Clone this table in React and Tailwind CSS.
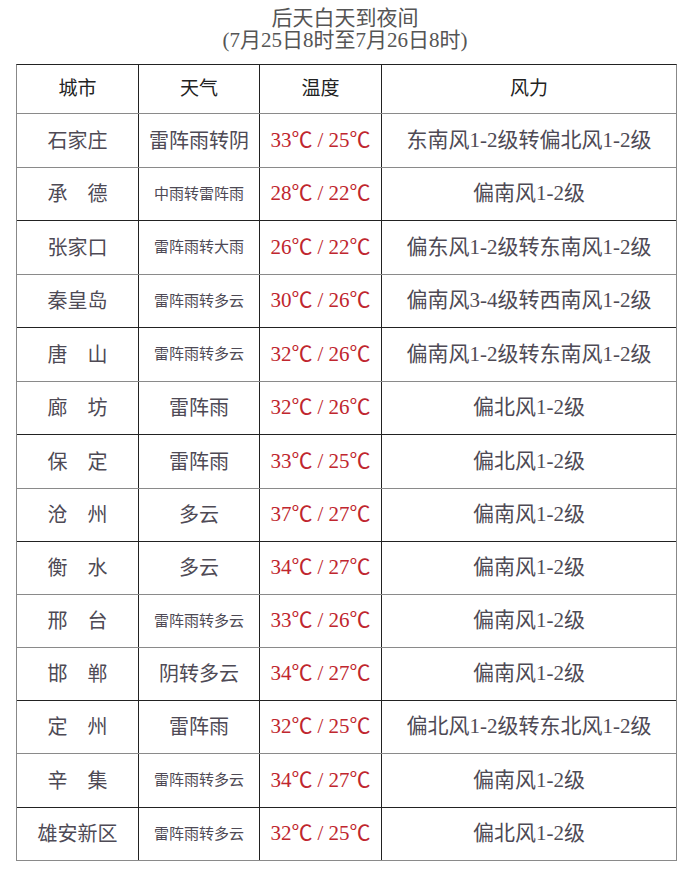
const font = '[font-family:"Liberation_Serif","Noto_Sans_CJK_SC",serif]'

const rows = [
  { city: '石家庄', weather: '雷阵雨转阴', big: true, temp: ['33', '25'], wind: '东南风1-2级转偏北风1-2级', line: 'border-[#8a8a8a]', h: 'h-[54px]' },
  { city: '承　德', weather: '中雨转雷阵雨', temp: ['28', '22'], wind: '偏南风1-2级', line: 'border-[#8a8a8a]', h: 'h-[53px]' },
  { city: '张家口', weather: '雷阵雨转大雨', temp: ['26', '22'], wind: '偏东风1-2级转东南风1-2级', line: 'border-[#222]', h: 'h-[54px]' },
  { city: '秦皇岛', weather: '雷阵雨转多云', temp: ['30', '26'], wind: '偏南风3-4级转西南风1-2级', line: 'border-[#8a8a8a]', h: 'h-[53px]' },
  { city: '唐　山', weather: '雷阵雨转多云', temp: ['32', '26'], wind: '偏南风1-2级转东南风1-2级', line: 'border-[#222]', h: 'h-[54px]' },
  { city: '廊　坊', weather: '雷阵雨', big: true, temp: ['32', '26'], wind: '偏北风1-2级', line: 'border-[#8a8a8a]', h: 'h-[53px]' },
  { city: '保　定', weather: '雷阵雨', big: true, temp: ['33', '25'], wind: '偏北风1-2级', line: 'border-[#222]', h: 'h-[54px]' },
  { city: '沧　州', weather: '多云', big: true, temp: ['37', '27'], wind: '偏南风1-2级', line: 'border-[#8a8a8a]', h: 'h-[53px]' },
  { city: '衡　水', weather: '多云', big: true, temp: ['34', '27'], wind: '偏南风1-2级', line: 'border-[#222]', h: 'h-[53px]' },
  { city: '邢　台', weather: '雷阵雨转多云', temp: ['33', '26'], wind: '偏南风1-2级', line: 'border-[#8a8a8a]', h: 'h-[53px]' },
  { city: '邯　郸', weather: '阴转多云', big: true, temp: ['34', '27'], wind: '偏南风1-2级', line: 'border-[#8a8a8a]', h: 'h-[53px]' },
  { city: '定　州', weather: '雷阵雨', big: true, temp: ['32', '25'], wind: '偏北风1-2级转东北风1-2级', line: 'border-[#222]', h: 'h-[53px]' },
  { city: '辛　集', weather: '雷阵雨转多云', temp: ['34', '27'], wind: '偏南风1-2级', line: 'border-[#8a8a8a]', h: 'h-[54px]' },
  { city: '雄安新区', weather: '雷阵雨转多云', temp: ['32', '25'], wind: '偏北风1-2级', line: 'border-[#222]', h: 'h-[53px]' },
]

function Temp({ t }) {
  return (
    <span className="text-[21px] text-[#c0262e] whitespace-nowrap">
      {t[0]}℃<span className="mx-[5px]">/</span>{t[1]}℃
    </span>
  )
}

export default function App() {
  return (
    <div className={`w-[690px] h-[892px] bg-white ${font}`}>
      <div className="pt-[7px] text-center text-[21px] leading-[22px] text-[#555]">
        <div>后天白天到夜间</div>
        <div>(7月25日8时至7月26日8时)</div>
      </div>

      <div className="ml-[16px] mt-[13px] w-[661px] border-x border-x-[#888] border-t border-t-[#222] border-b border-b-[#8a8a8a]">
        {/* header */}
        <div className="flex h-[48px] items-center text-[19px] text-[#222]">
          <div className="w-[121px] text-center">城市</div>
          <div className="w-[121px] h-full flex items-center justify-center border-l border-[#222]">天气</div>
          <div className="w-[122px] h-full flex items-center justify-center border-l border-[#222]">温度</div>
          <div className="flex-1 h-full flex items-center justify-center border-l border-[#222]">风力</div>
        </div>

        {rows.map((r, i) => (
          <div key={i} className={`flex ${r.h} border-t ${r.line} text-[#4e4a55]`}>
            <div className="w-[121px] flex items-center justify-center text-[20px] whitespace-nowrap">{r.city}</div>
            <div className={`w-[121px] flex items-center justify-center border-l border-[#222] whitespace-nowrap ${r.big ? 'text-[20px]' : 'text-[15px]'}`}>
              {r.weather}
            </div>
            <div className="w-[122px] flex items-center justify-center border-l border-[#222]">
              <Temp t={r.temp} />
            </div>
            <div className="flex-1 flex items-center justify-center border-l border-[#222] text-[21px] whitespace-nowrap">
              {r.wind}
            </div>
          </div>
        ))}
      </div>
    </div>
  )
}
